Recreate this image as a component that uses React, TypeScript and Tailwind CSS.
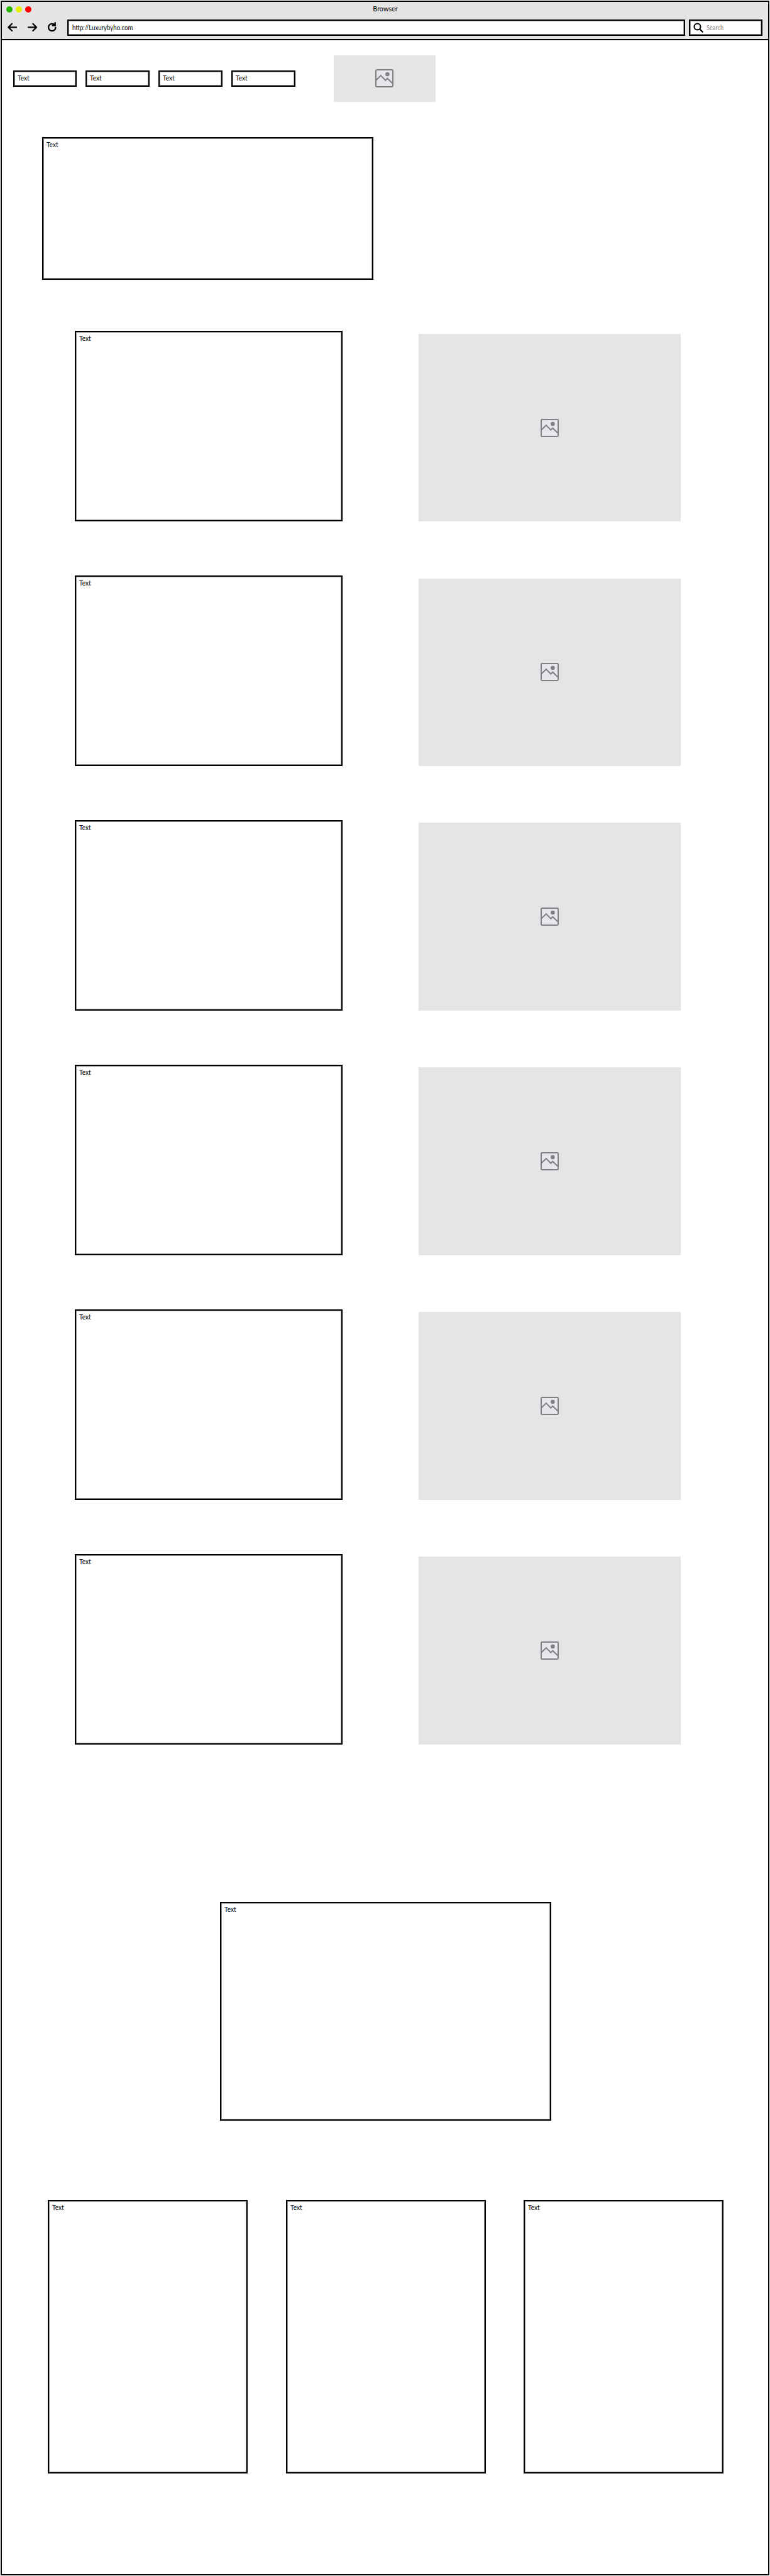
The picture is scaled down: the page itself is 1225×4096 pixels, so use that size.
import React from "react";

const FONT = "font-['Lato','Liberation_Sans',sans-serif]";

function Label({ children, className = "" }: { children: React.ReactNode; className?: string }) {
  return (
    <span className={`block w-fit origin-left whitespace-nowrap text-[10.5px] leading-[13px] ${className}`}>
      {children}
    </span>
  );
}

function Box({ className }: { className: string }) {
  return (
    <div
      className={`shrink-0 border-2 border-black bg-white pl-[5px] pt-[4px] shadow-[inset_0_0_0_1px_#00000066] ${className}`}
    >
      <Label className="scale-x-[.96]">Text</Label>
    </div>
  );
}

function Placeholder({ className }: { className: string }) {
  return (
    <div className={`flex shrink-0 items-center justify-center bg-[#e5e5e5] ${className}`}>
      <svg viewBox="0 0 36 36" className="h-[29px] w-[29px]" fill="none" stroke="#7f8187" strokeWidth="2.5">
        <rect x="1.25" y="1.25" width="33.5" height="33.5" rx="1.8" fill="#e5e7ea" />
        <path d="M2 21.5 L11 12.5 L20.3 22 L24 18.2 L34 28" />
        <circle cx="24" cy="10" r="4.1" fill="#7f8187" stroke="none" />
      </svg>
    </div>
  );
}

function Header() {
  return (
    <header className="h-[61px] shrink-0 border-b-2 border-black bg-[#e4e4e4]">
      <div className="grid h-[28px] grid-cols-3 items-start">
        <div className="flex gap-[4.6px] pl-[7.4px] pt-[7.4px]">
          <i className="size-[10px] rounded-full bg-[#26b400]" />
          <i className="size-[10px] rounded-full bg-[#e6f000]" />
          <i className="size-[10px] rounded-full bg-[#ff0000]" />
        </div>
        <div className="pt-[4px] text-center text-[11.5px] leading-[14px]">
          <span className="inline-block scale-x-[.94]">Browser</span>
        </div>
      </div>
      <div className="flex">
        <div className="flex w-[104px] shrink-0 pl-[9px]">
          <svg viewBox="46 131 57 60" className="mt-[4px] h-[16.2px] w-[15.4px]" fill="none" stroke="#000" strokeWidth="8" strokeLinecap="round" strokeLinejoin="round">
            <path d="M72 141 L51 162 L72 183 M51 162 H99" />
          </svg>
          <svg viewBox="163 131 57 60" className="ml-[16.2px] mt-[4px] h-[16.2px] w-[15.4px]" fill="none" stroke="#000" strokeWidth="8" strokeLinecap="round" strokeLinejoin="round">
            <path d="M194 141 L215 162 L194 183 M215 162 H167" />
          </svg>
          <svg viewBox="280 131 57 60" className="ml-[16.2px] mt-[4px] h-[16.2px] w-[15.4px]" fill="none" stroke="#000" strokeWidth="8.5" strokeLinecap="round" strokeLinejoin="round">
            <path d="M330 163 A21 21 0 1 1 322 146 L327 151 V135 M327 152 H312 L322 146" />
          </svg>
        </div>
        <div className="flex h-[26px] w-[983px] items-center border-2 border-black bg-white pl-[6px] shadow-[inset_0_0_0_1px_#00000066]">
          <Label className="scale-x-[.92]">http://Luxurybyho.com</Label>
        </div>
        <div className="ml-[6px] flex h-[26px] w-[117px] items-center border-2 border-black bg-white pl-[5px] shadow-[inset_0_0_0_1px_#00000066]">
          <svg viewBox="484 131 62 62" className="h-[16.7px] w-[16.7px] shrink-0" fill="none" stroke="#000" strokeWidth="8">
            <circle cx="508" cy="155" r="18.5" />
            <path d="M521 168 L541 188" />
          </svg>
          <Label className="ml-[4px] scale-x-[.88] text-[#85858a]">Search</Label>
        </div>
      </div>
    </header>
  );
}

export default function App() {
  return (
    <div className={`h-[4096px] w-[1225px] bg-white p-px text-black ${FONT}`}>
      <div className="flex h-[4094px] w-[1223px] flex-col border-2 border-black">
        <Header />
        <main className="flex flex-col">
          <nav className="mt-[23.5px] flex h-[74.5px] items-center gap-[13.9px] pl-[17.5px]">
            {[0, 1, 2, 3].map((n) => (
              <Box key={n} className="h-[26px] w-[101.9px]" />
            ))}
            <Placeholder className="ml-[46.9px] h-[74.5px] w-[162px]" />
          </nav>

          <Box className="ml-[64px] mt-[56px] h-[227.3px] w-[527px]" />

          <section className="mt-[81px] flex flex-col gap-[85.87px] pl-[116.4px]">
            {[0, 1, 2, 3, 4, 5].map((n) => (
              <div key={n} className="flex h-[303px]">
                <Box className="h-[303px] w-[426px]" />
                <Placeholder className="ml-[121.1px] mt-[4.4px] h-[298.8px] w-[416.5px]" />
              </div>
            ))}
          </section>

          <Box className="ml-[347.4px] mt-[250.1px] h-[348.5px] w-[527px]" />

          <section className="mt-[126.2px] flex gap-[60.2px] pl-[73.4px]">
            {[0, 1, 2].map((n) => (
              <Box key={n} className="h-[434.8px] w-[318.1px]" />
            ))}
          </section>
        </main>
      </div>
    </div>
  );
}
